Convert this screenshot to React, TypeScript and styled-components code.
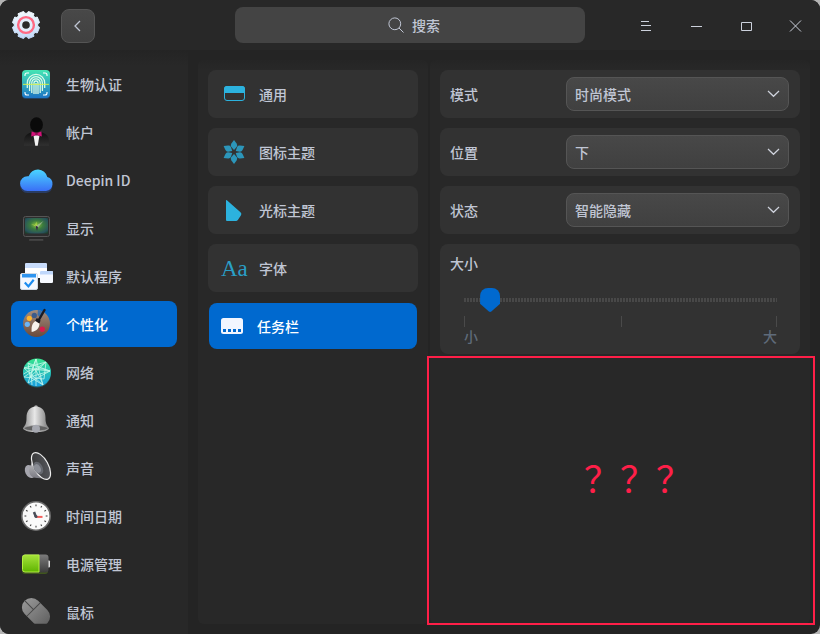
import React, { useState } from "react";
import styled, { createGlobalStyle, css } from "styled-components";

const colors = {
  text: "#c0c6d4",
  muted: "#5f6b7a",
  panel: "#282828",
  base: "#242424",
  card: "#323232",
  accent: "#0069cf",
  icon: "#2cb2de",
  alert: "#ff1f48",
};

const GlobalStyle = createGlobalStyle`
  * { box-sizing: border-box; }
  body { margin: 0; background: #b4b4b4; }
  button, input, select {
    font: inherit;
    color: inherit;
    border: 0;
    margin: 0;
    padding: 0;
    background: none;
  }
`;

const Window = styled.div`
  display: flex;
  flex-direction: column;
  height: 100vh;
  overflow: hidden;
  border-radius: 9px;
  background: ${colors.base};
  color: ${colors.text};
  font-family: "Noto Sans CJK SC", "Noto Sans", sans-serif;
  font-size: 14px;
  line-height: 20px;
  font-weight: 500;
`;

const Header = styled.header`
  display: grid;
  grid-template-columns: 1fr minmax(0, 350px) 1fr;
  align-items: center;
  height: 50px;
  flex: none;
  background: ${colors.panel};
`;

const HeaderStart = styled.div`
  display: flex;
  align-items: center;
  gap: 20px;
  padding: 2px 0 0 11px;
`;

const BackButton = styled.button`
  display: grid;
  place-items: center;
  width: 34px;
  height: 34px;
  border: 1px solid #555;
  border-radius: 8px;
  background: linear-gradient(#484848, #404040);
`;

const SearchBox = styled.label`
  display: flex;
  align-items: center;
  justify-content: center;
  gap: 8px;
  height: 36px;
  padding-left: 8px;
  border-radius: 8px;
  background: #444;
`;

const SearchInput = styled.input`
  field-sizing: content;
  width: auto;
  min-width: 28px;
  max-width: 80%;
  height: 20px;
  outline: none;
  &::placeholder { color: ${colors.text}; opacity: 1; }
`;

const WindowControls = styled.div`
  display: flex;
  justify-content: flex-end;
`;

const ControlButton = styled.button`
  display: block;
  width: 50px;
  height: 50px;
`;

const Body = styled.div`
  display: flex;
  flex: 1;
  min-height: 0;
`;

const Sidebar = styled.nav`
  display: flex;
  flex-direction: column;
  gap: 2px;
  width: 188px;
  flex: none;
  padding: 11px 11px 0;
  overflow-y: auto;
  scrollbar-width: none;
  background: linear-gradient(#242424, ${colors.panel} 16px);
`;

const activeItem = css`
  background: ${colors.accent};
  color: #fff;
`;

const SidebarItem = styled.button<{ $active: boolean }>`
  display: flex;
  align-items: center;
  gap: 12px;
  width: 166px;
  height: 46px;
  flex: none;
  padding: 0 7px;
  border-radius: 8px;
  text-align: left;
  ${(p) => p.$active && activeItem}
`;

const Content = styled.main`
  display: flex;
  gap: 2px;
  flex: 1;
  min-width: 0;
  padding: 10px;
`;

const Panel = styled.section`
  display: flex;
  flex-direction: column;
  min-width: 0;
  padding: 10px 10px 0;
  border-radius: 6px;
  background: linear-gradient(#252525, ${colors.panel} 10px);
`;

const CategoryPanel = styled(Panel)`
  flex: none;
  width: 230px;
  gap: 10px;
`;

const DetailPanel = styled(Panel)`
  flex: 1;
`;

const CategoryItem = styled.button<{ $active: boolean }>`
  display: flex;
  align-items: center;
  gap: 12px;
  height: 48px;
  padding: 0 13px;
  border-radius: 8px;
  background: ${colors.card};
  text-align: left;
  ${(p) =>
    p.$active &&
    css`
      ${activeItem}
      height: 46px;
      margin: 1px;
      padding: 0 10px;
    `}
`;

const FontGlyph = styled.span`
  width: 26px;
  padding-top: 2px;
  color: #2a9fc6;
  font-family: "Liberation Serif", serif;
  font-size: 23px;
  font-weight: 400;
  line-height: 26px;
`;

const Settings = styled.div`
  display: flex;
  flex-direction: column;
  gap: 10px;
`;

const SelectRow = styled.div`
  display: grid;
  grid-template-columns: 106px minmax(0, 1fr);
  gap: 10px;
  align-items: center;
  height: 48px;
  padding: 0 11px 0 10px;
  border-radius: 8px;
  background: ${colors.card};
`;

const SelectField = styled.div`
  display: grid;
  align-items: center;
  & > * { grid-area: 1 / 1; }
  & > svg { justify-self: end; margin-right: 8px; pointer-events: none; }
`;

const Select = styled.select`
  appearance: none;
  width: 100%;
  height: 34px;
  padding: 0 32px 0 8px;
  border: 1px solid #555;
  border-radius: 8px;
  background: linear-gradient(#484848, #404040);
  option { background: #404040; }
`;

const SliderCard = styled.div`
  display: flex;
  flex-direction: column;
  padding: 9px 10px 8px;
  border-radius: 8px;
  background: ${colors.card};
`;

const SliderArea = styled.div`
  display: flex;
  flex-direction: column;
  gap: 4px;
  padding: 15px 13px 0 14px;
`;

const Range = styled.input`
  appearance: none;
  display: block;
  width: 100%;
  height: 24px;
  background: repeating-linear-gradient(90deg, #484848 0 2px, transparent 2px 3px)
    center / 100% 4px no-repeat;
  &::-webkit-slider-thumb {
    appearance: none;
    width: 20px;
    height: 24px;
    border-radius: 8px 8px 0 0;
    background: ${colors.accent};
    clip-path: polygon(0 0, 100% 0, 100% 66%, 56% 98%, 50% 100%, 44% 98%, 0 66%);
  }
`;

const Scale = styled.div`
  display: grid;
  grid-template-columns: 1fr 1fr;
  height: 11px;
  border: solid #4a4a4a;
  border-width: 0 1px;
  & > span + span { border-left: 1px solid #4a4a4a; }
`;

const ScaleLabels = styled.div`
  display: flex;
  justify-content: space-between;
  margin-top: -5px;
  color: ${colors.muted};
`;

const Callout = styled.div`
  display: flex;
  flex: 1;
  align-items: center;
  justify-content: center;
  min-height: 0;
  margin: 2px -15px -1px -13px;
  padding: 0 0 28px 34px;
  border: 2px solid ${colors.alert};
  color: ${colors.alert};
  font-size: 36px;
  font-weight: 400;
  line-height: 48px;
`;

const Logo = () => (
  <svg width="30" height="30" viewBox="0 0 30 30" aria-hidden="true">
    <defs>
      <linearGradient id="cog" x1="0" y1="0" x2="0" y2="30" gradientUnits="userSpaceOnUse">
        <stop offset="0" stopColor="#f4fbff" />
        <stop offset="1" stopColor="#bcd6f8" />
      </linearGradient>
    </defs>
    <path
      d={Array.from({ length: 8 }, (_, i) => {
        const base = ((i * 45 + 22.5) * Math.PI) / 180;
        return [
          [-0.29, 11.8],
          [-0.22, 13.8],
          [0.22, 13.8],
          [0.29, 11.8],
        ]
          .map(([a, r], j) => {
            const x = 15 + Math.cos(base + a) * r;
            const y = 14 + Math.sin(base + a) * r;
            return `${i === 0 && j === 0 ? "M" : "L"}${x.toFixed(2)} ${y.toFixed(2)}`;
          })
          .join("");
      }).join("") + "Z"}
      fill="url(#cog)"
      stroke="url(#cog)"
      strokeLinejoin="round"
    />
    <circle cx="15" cy="14" r="7.9" fill="#e2eefc" stroke="#ff6a84" strokeWidth="2.4" />
    <circle cx="15" cy="14" r="3.8" fill="#2a2a2a" />
  </svg>
);

const SearchIcon = () => (
  <svg width="16" height="16" viewBox="0 0 16 16" fill="none" stroke={colors.text} aria-hidden="true">
    <circle cx="6.8" cy="6.8" r="5.9" />
    <path d="M11 11l4.5 4.5" />
  </svg>
);

const Chevron = () => (
  <svg width="14" height="14" viewBox="0 0 14 14" fill="none" stroke="#ced2dc" strokeWidth="1.2" aria-hidden="true">
    <path d="M1 4L6.500 9.300 12 4" />
  </svg>
);

const ControlIcon = ({ d }: { d: string }) => (
  <svg width="50" height="50" viewBox="0 0 50 50" fill="none" stroke="#ccd1dc" aria-hidden="true">
    <path d={d} />
  </svg>
);

const IconFrame = ({ children }: { children: React.ReactNode }) => (
  <svg width="36" height="36" viewBox="0 0 36 36" aria-hidden="true">
    {children}
  </svg>
);

const Gradient = ({ id, from, to, x2 = 0 }: { id: string; from: string; to: string; x2?: number }) => (
  <linearGradient id={id} x1="0" y1="0" x2={x2} y2="1">
    <stop offset="0" stopColor={from} />
    <stop offset="1" stopColor={to} />
  </linearGradient>
);

const FingerprintIcon = () => (
  <IconFrame>
    <defs>
      <Gradient id="fp" from="#45e6b4" to="#1d74c4" />
    </defs>
    <rect x="4" y="5" width="28" height="28" rx="4" fill="#1573c8" opacity=".35" />
    <rect x="4" y="4" width="28" height="28" rx="4" fill="url(#fp)" />
    <g fill="none" stroke="#fff" strokeWidth="1.1">
      <path d="M7 10V9a2 2 0 012-2h2M25 7h2a2 2 0 012 2v1M29 26v1a2 2 0 01-2 2h-2M11 29H9a2 2 0 01-2-2v-1" />
      <g stroke="#dcfbe8" strokeWidth="1.3">
        <path d="M9.3 22v-5a8.7 8.7 0 0117.4 0v5" />
        <path d="M11.6 25v-8a6.4 6.4 0 0112.8 0v8" />
        <path d="M13.8 27V17a4.2 4.2 0 018.4 0v10" />
        <path d="M16 28V17a2 2 0 014 0v11M18 17v11" />
      </g>
    </g>
    <path d="M5 18.4h26" stroke="#d6f24a" strokeWidth="1.2" opacity=".8" />
  </IconFrame>
);

const AccountIcon = () => (
  <IconFrame>
    <defs>
      <Gradient id="suit" from="#101010" to="#303030" />
    </defs>
    <path d="M6 31.7v-5c0-5 3.5-7.5 8.5-8.7h8c5 1.2 8.5 3.7 8.5 8.7v5z" fill="url(#suit)" />
    <ellipse cx="18.5" cy="10.8" rx="6.4" ry="7.5" fill="#0a0a0a" />
    <path d="M15.6 22l2.9-1.5 2.9 1.5-1.7 9.7h-2.4z" fill="#f2f2f2" />
    <path d="M13.6 17.5l4.9 1.6 4.9-1.6.4 5-5.3-1.5-5.3 1.5z" fill="#d3127a" />
    <rect x="17.3" y="18.5" width="2.4" height="3" fill="#8e0f52" />
  </IconFrame>
);

const cloudPath = "M9.4 29a7.4 7.4 0 01.2-14.8h1a9.7 9.7 0 0118.7.9A7.1 7.1 0 0128 29z";

const CloudIcon = () => (
  <IconFrame>
    <defs>
      <Gradient id="cloud" from="#4ad6ff" to="#3a6ff6" />
    </defs>
    <path transform="translate(0 2)" opacity=".3" fill="#2e6cf0" d={cloudPath} />
    <path fill="url(#cloud)" d={cloudPath} />
  </IconFrame>
);

const DisplayIcon = () => (
  <IconFrame>
    <defs>
      <radialGradient id="screen" cx=".5" cy=".45" r=".7">
        <stop offset="0" stopColor="#8cc63c" />
        <stop offset=".4" stopColor="#3a7a3e" />
        <stop offset=".8" stopColor="#28525c" />
        <stop offset="1" stopColor="#1a4028" />
      </radialGradient>
    </defs>
    <rect x="5.5" y="6.5" width="26" height="20" rx="2" fill="#2d2d2d" stroke="#555" />
    <rect x="7" y="8" width="23" height="15.5" fill="url(#screen)" />
    <path d="M17 16.5l8.5-5.5-5.5 6.5z" fill="#a9b7a0" opacity=".8" />
    <path d="M13 14l4 1 1.5-3.5.5 5.5z" fill="#b9dc4c" opacity=".8" />
    <path d="M17.5 15.5l1.5 5.5 1-4z" fill="#332244" />
    <rect x="11" y="29" width="14.5" height="1.8" rx=".9" fill="#474747" />
  </IconFrame>
);

const DefaultAppsIcon = () => (
  <IconFrame>
    <rect x="7" y="5" width="22" height="15" rx="1.5" fill="#fff" />
    <path d="M7 10V6.5A1.5 1.5 0 018.5 5h19A1.5 1.5 0 0129 6.5V10z" fill="#c8dcfb" />
    <rect x="22" y="13" width="13" height="12" rx="1.3" fill="#f6f9ff" />
    <path d="M22 16.5v-2.2A1.3 1.3 0 0123.3 13h10.4a1.3 1.3 0 011.3 1.3v2.2z" fill="#bfd7fb" />
    <rect x="2.5" y="15.5" width="17" height="16" rx="1.5" fill="#f3f8ff" stroke="#cfd9e4" />
    <path d="M4 16h14v3.5H4z" fill="#2f95ef" />
    <path d="M6.8 24.6l3.6 3.8 5.3-6.6" fill="none" stroke="#1a8cf0" strokeWidth="2.2" />
  </IconFrame>
);

const PaletteIcon = () => (
  <IconFrame>
    <defs>
      <Gradient id="wood" from="#a28d7f" to="#6b4a3a" />
    </defs>
    <circle cx="18.5" cy="17.5" r="13.5" fill="url(#wood)" />
    <circle cx="16.3" cy="9.4" r="2.6" fill="#3a5b8c" />
    <path d="M20 4l6 2-3 6-3.5-3z" fill="#0d63c0" opacity=".65" />
    <circle cx="11.3" cy="12.3" r="2.6" fill="#ffb52e" />
    <circle cx="9.3" cy="18.3" r="2.6" fill="#6cb4f5" />
    <circle cx="24.3" cy="23.3" r="2.7" fill="#d81b4c" />
    <path d="M26.5 4L20.5 14.5" stroke="#1b1b22" strokeWidth="2.4" strokeLinecap="round" />
    <path d="M17.5 15l4 2.600c-.3 4.500-2.300 7.400-7.800 8.400-.6-4.500.2-8.700 3.800-11z" fill="#f7f3ee" />
    <path d="M18.8 12l3.8 2.600-1.200 2.900-4.200-2.800z" fill="#1b1b22" />
  </IconFrame>
);

const NetworkIcon = () => (
  <IconFrame>
    <defs>
      <Gradient id="globe" from="#36e38e" to="#189fe0" />
    </defs>
    <circle cx="19" cy="19.5" r="14" fill="#1fb9c8" opacity=".35" />
    <circle cx="19" cy="18.5" r="14" fill="url(#globe)" />
    <g fill="none" stroke="#d4fff0" strokeWidth=".8" opacity=".9">
      <path d="M18 5l-8 24M18 5l7 26M18 5v27M6 14l26 3M6 14l19 17M32 17L10 29M10 9l22 8M10 9l2 14 20-6M28 8L6 23l20 2L28 8M6 14l22-6M12 23l13 8M12 23L28 8" />
      <path d="M5.5 20q12-9 26.5-3M10 9q10 7 15 22M14 31q-2-14 4-26" />
    </g>
  </IconFrame>
);

const BellIcon = () => (
  <IconFrame>
    <defs>
      <linearGradient id="bell">
        <stop offset="0" stopColor="#8b8b8b" />
        <stop offset=".45" stopColor="#e8e8e8" />
        <stop offset="1" stopColor="#777" />
      </linearGradient>
    </defs>
    <circle cx="18" cy="5" r="1.8" fill="#aaa" />
    <path d="M18 4.5c6.500 0 9.500 5 9.500 11 0 5 .5 7 3.500 10.500 0 2.500-5.500 4-13 4s-13-1.500-13-4c3-3.500 3.500-5.500 3.500-10.500 0-6 3-11 9.500-11z" fill="url(#bell)" />
    <ellipse cx="18" cy="26.3" rx="12" ry="2.7" fill="#626262" stroke="#aaa" strokeWidth=".6" />
    <circle cx="18" cy="26.8" r="4" fill="#a6a8b0" />
  </IconFrame>
);

const SoundIcon = () => (
  <IconFrame>
    <defs>
      <Gradient id="magnet" from="#dcdcdc" to="#77777f" />
      <Gradient id="cone" from="#333" to="#5a5c62" x2={1} />
    </defs>
    <ellipse cx="12" cy="21.5" rx="4.8" ry="6.8" fill="#a6a6ae" transform="rotate(-25 12 21.5)" />
    <path d="M15.5 3C15 10 13 15 11.500 18c-1 4 .5 8 4 9.500 5 .5 9 1 13 1.500z" fill="url(#magnet)" />
    <ellipse cx="23" cy="16" rx="7.2" ry="14.8" transform="rotate(-29 23 16)" fill="url(#cone)" stroke="#ededed" strokeWidth="1.2" />
    <ellipse cx="20.3" cy="18" rx="4.3" ry="6.8" transform="rotate(-29 20.3 18)" fill="#65686f" />
    <ellipse cx="19.5" cy="18.5" rx="3" ry="4.6" transform="rotate(-29 19.5 18.5)" fill="#8b8e96" />
  </IconFrame>
);

const ClockIcon = () => (
  <IconFrame>
    <circle cx="18" cy="18" r="14.2" fill="#fafafa" stroke="#6a6a6a" strokeWidth="1.6" />
    {Array.from({ length: 12 }, (_, i) => (
      <path key={i} d="M18 6.5v1.8" stroke="#444" strokeWidth="1.1" transform={`rotate(${i * 30} 18 18)`} />
    ))}
    <path d="M17.8 18.6l-1.8-4.6" stroke="#4a4e58" strokeWidth="2.6" />
    <path d="M18 18.9h6.5" stroke="#f4605c" strokeWidth="2" />
    <circle cx="18" cy="18.6" r="1.5" fill="#4a4e58" />
  </IconFrame>
);

const BatteryIcon = () => (
  <IconFrame>
    <defs>
      <Gradient id="charge" from="#a5e23c" to="#5fb400" />
      <Gradient id="shell" from="#7c7c7c" to="#3c3c3c" />
    </defs>
    <rect x="4" y="10" width="26" height="18" rx="3" fill="#7ac40a" opacity=".3" />
    <rect x="28" y="14.5" width="4" height="7" rx="1" fill="#ddd" />
    <rect x="4" y="8.5" width="26.5" height="18" rx="3" fill="url(#shell)" />
    <path d="M21 9H7a2.5 2.5 0 00-2.5 2.5v12A2.5 2.5 0 007 26h14z" fill="url(#charge)" stroke="#b3f03c" />
  </IconFrame>
);

const MouseIcon = () => (
  <IconFrame>
    <defs>
      <Gradient id="mouse" from="#969696" to="#636363" />
      <clipPath id="mouseClip">
        <rect width="36" height="29.7" />
      </clipPath>
    </defs>
    <g clipPath="url(#mouseClip)">
      <g transform="rotate(-45 18 18)">
        <rect x="8.5" y="2" width="19" height="32" rx="9.5" fill="url(#mouse)" />
        <path d="M8.5 14.5h19M18 2v12.5" stroke="#484848" strokeWidth="1" />
      </g>
    </g>
  </IconFrame>
);

const CategoryFrame = ({ children }: { children: React.ReactNode }) => (
  <svg width="26" height="26" viewBox="0 0 26 26" aria-hidden="true">
    {children}
  </svg>
);

const GeneralIcon = () => (
  <CategoryFrame>
    <rect x="3.5" y="5.5" width="20" height="14" rx="2.5" fill="none" stroke={colors.icon} />
    <path d="M3 13V8a3 3 0 013-3h15a3 3 0 013 3v5q0-1-1-1H4q-1 0-1 1z" fill={colors.icon} />
  </CategoryFrame>
);

const IconThemeIcon = () => (
  <CategoryFrame>
    {[0, 60, 120, 180, 240, 300].map((a) => (
      <path key={a} d="M13 1l2.600 3.600q1.200 1.700.2 3.200L13 11l-2.800-3.200q-1-1.500.2-3.200z" fill="#2c96ba" transform={`rotate(${a} 13 13)`} />
    ))}
  </CategoryFrame>
);

const CursorIcon = () => (
  <CategoryFrame>
    <path d="M5 3.500q0-1 .9-.2l13.600 12q1.500 1.400.5 3l-3 4.500q-.9 1.200-2 1.200H6q-1 0-1-1z" fill={colors.icon} />
  </CategoryFrame>
);

const TaskbarIcon = () => (
  <CategoryFrame>
    <rect x="2" y="5" width="22" height="16" rx="2.5" fill="#f2f6ff" />
    <path d="M4 16h3v3H4zM9 16h3v3H9zM14 16h3v3h-3zM19 16h3v3h-3z" fill={colors.accent} />
  </CategoryFrame>
);

const sidebarItems = [
  { label: "生物认证", icon: <FingerprintIcon /> },
  { label: "帐户", icon: <AccountIcon /> },
  { label: "Deepin ID", icon: <CloudIcon /> },
  { label: "显示", icon: <DisplayIcon /> },
  { label: "默认程序", icon: <DefaultAppsIcon /> },
  { label: "个性化", icon: <PaletteIcon /> },
  { label: "网络", icon: <NetworkIcon /> },
  { label: "通知", icon: <BellIcon /> },
  { label: "声音", icon: <SoundIcon /> },
  { label: "时间日期", icon: <ClockIcon /> },
  { label: "电源管理", icon: <BatteryIcon /> },
  { label: "鼠标", icon: <MouseIcon /> },
];

const categories = [
  { label: "通用", icon: <GeneralIcon /> },
  { label: "图标主题", icon: <IconThemeIcon /> },
  { label: "光标主题", icon: <CursorIcon /> },
  { label: "字体", icon: <FontGlyph aria-hidden="true">Aa</FontGlyph> },
  { label: "任务栏", icon: <TaskbarIcon /> },
];

const selects = [
  { id: "mode", label: "模式", value: "时尚模式" },
  { id: "position", label: "位置", value: "下" },
  { id: "status", label: "状态", value: "智能隐藏" },
];

const controls = [
  { label: "菜单", d: "M21 21.5h8M21 25.5h10M21 30.5h10" },
  { label: "最小化", d: "M21 26.5h11" },
  { label: "最大化", d: "M21.5 22.5h10v8h-10z" },
  { label: "关闭", d: "M20 20.5l11 11M31 20.5l-11 11" },
];

export default function App() {
  const [section, setSection] = useState("个性化");
  const [category, setCategory] = useState("任务栏");
  const [size, setSize] = useState(11);

  return (
    <Window lang="zh-CN">
      <GlobalStyle />
      <Header>
        <HeaderStart>
          <Logo />
          <BackButton type="button" aria-label="返回">
            <svg width="14" height="14" viewBox="0 0 14 14" fill="none" stroke={colors.text} strokeWidth="1.3" aria-hidden="true">
              <path d="M9 2L4 7l5 5" />
            </svg>
          </BackButton>
        </HeaderStart>
        <SearchBox>
          <SearchIcon />
          <SearchInput type="text" placeholder="搜索" aria-label="搜索" />
        </SearchBox>
        <WindowControls>
          {controls.map((c) => (
            <ControlButton key={c.label} type="button" aria-label={c.label}>
              <ControlIcon d={c.d} />
            </ControlButton>
          ))}
        </WindowControls>
      </Header>
      <Body>
        <Sidebar>
          {sidebarItems.map((item) => (
            <SidebarItem key={item.label} type="button" $active={item.label === section} onClick={() => setSection(item.label)}>
              {item.icon}
              {item.label}
            </SidebarItem>
          ))}
        </Sidebar>
        <Content>
          <CategoryPanel>
            {categories.map((item) => (
              <CategoryItem key={item.label} type="button" $active={item.label === category} onClick={() => setCategory(item.label)}>
                {item.icon}
                {item.label}
              </CategoryItem>
            ))}
          </CategoryPanel>
          <DetailPanel>
            <Settings>
              {selects.map((s) => (
                <SelectRow key={s.id}>
                  <label htmlFor={s.id}>{s.label}</label>
                  <SelectField>
                    <Select id={s.id} defaultValue={s.value}>
                      <option>{s.value}</option>
                    </Select>
                    <Chevron />
                  </SelectField>
                </SelectRow>
              ))}
              <SliderCard>
                <label htmlFor="size">大小</label>
                <SliderArea>
                  <Range id="size" type="range" min={0} max={200} value={size} onChange={(e) => setSize(Number(e.target.value))} />
                  <Scale>
                    <span />
                    <span />
                  </Scale>
                  <ScaleLabels>
                    <span>小</span>
                    <span>大</span>
                  </ScaleLabels>
                </SliderArea>
              </SliderCard>
            </Settings>
            <Callout>？？？</Callout>
          </DetailPanel>
        </Content>
      </Body>
    </Window>
  );
}
